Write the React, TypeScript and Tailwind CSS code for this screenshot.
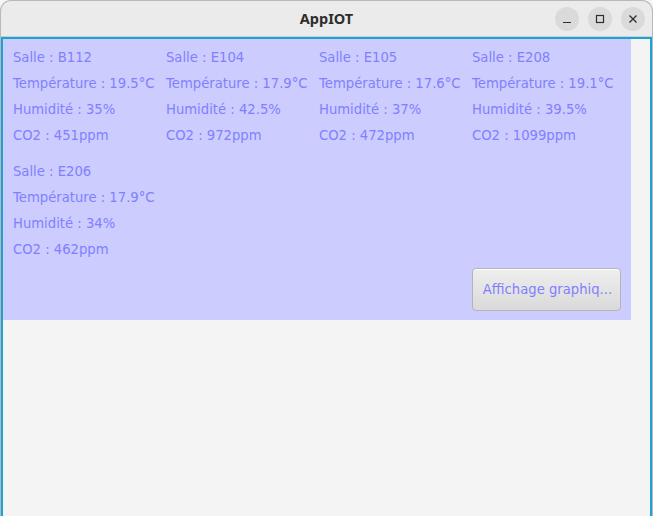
const rooms = [
  { salle: 'B112', temp: '19.5', hum: '35', co2: '451' },
  { salle: 'E104', temp: '17.9', hum: '42.5', co2: '972' },
  { salle: 'E105', temp: '17.6', hum: '37', co2: '472' },
  { salle: 'E208', temp: '19.1', hum: '39.5', co2: '1099' },
  { salle: 'E206', temp: '17.9', hum: '34', co2: '462' },
];

function TitleButton({ children }: { children: React.ReactNode }) {
  return (
    <div className="w-[24px] h-[24px] rounded-full bg-[#dadada] flex items-center justify-center text-[#2e2e2e]">
      {children}
    </div>
  );
}

function RoomCard({ r }: { r: (typeof rooms)[number] }) {
  const lines = [
    `Salle : ${r.salle}`,
    `Température : ${r.temp}°C`,
    `Humidité : ${r.hum}%`,
    `CO2 : ${r.co2}ppm`,
  ];
  return (
    <div className="flex flex-col">
      {lines.map((l) => (
        <div key={l} className="h-[26px] leading-[26px] whitespace-nowrap">
          {l}
        </div>
      ))}
    </div>
  );
}

export default function App() {
  return (
    <div className="w-[653px] h-[516px] bg-[#f6f6f6] overflow-hidden">
      <div className="h-full flex flex-col rounded-t-[11px] border border-b-0 border-[#b9b9b9] bg-[#ebebeb] overflow-hidden">
        <div className="h-[36px] shrink-0 relative flex items-center justify-center border-b border-[#cfcfcf]">
          <span className="text-[14.5px] font-bold text-[#2e2e2e] font-['Noto_Sans',sans-serif]">AppIOT</span>
          <div className="absolute right-[7px] top-[6px] flex gap-[9px]">
            <TitleButton>
              <svg width="10" height="10" viewBox="0 0 10 10">
                <path d="M1 8.5h8" stroke="currentColor" strokeWidth="1.2" />
              </svg>
            </TitleButton>
            <TitleButton>
              <svg width="10" height="10" viewBox="0 0 10 10">
                <rect x="1.5" y="1.5" width="7" height="7" fill="none" stroke="currentColor" strokeWidth="1.2" />
              </svg>
            </TitleButton>
            <TitleButton>
              <svg width="10" height="10" viewBox="0 0 10 10">
                <path d="M1.5 1.5l7 7M8.5 1.5l-7 7" stroke="currentColor" strokeWidth="1.3" />
              </svg>
            </TitleButton>
          </div>
        </div>
        <div className="flex-1 border-[2px] border-b-0 border-[#1aa3d4] bg-[#f4f4f4] font-['DejaVu_Sans',sans-serif] text-[13.2px] text-[#8080ff]">
          <div className="w-[628px] bg-[#ccccff] pl-[10px] pr-[10px] pt-[6px] pb-[9px]">
            <div className="grid grid-cols-[153px_153px_153px_auto] gap-y-[10px]">
              {rooms.map((r) => (
                <RoomCard key={r.salle} r={r} />
              ))}
            </div>
            <div className="flex justify-end mt-[5px]">
              <button className="w-[149px] h-[43px] rounded-[4px] border border-[#b4b4b4] bg-gradient-to-b from-[#eeeeee] to-[#dadada] text-[#8080ff] text-[13.2px] pl-[2px] shadow-[0_1px_0_#ffffff_inset]">
                Affichage graphiq...
              </button>
            </div>
          </div>
        </div>
      </div>
    </div>
  );
}
